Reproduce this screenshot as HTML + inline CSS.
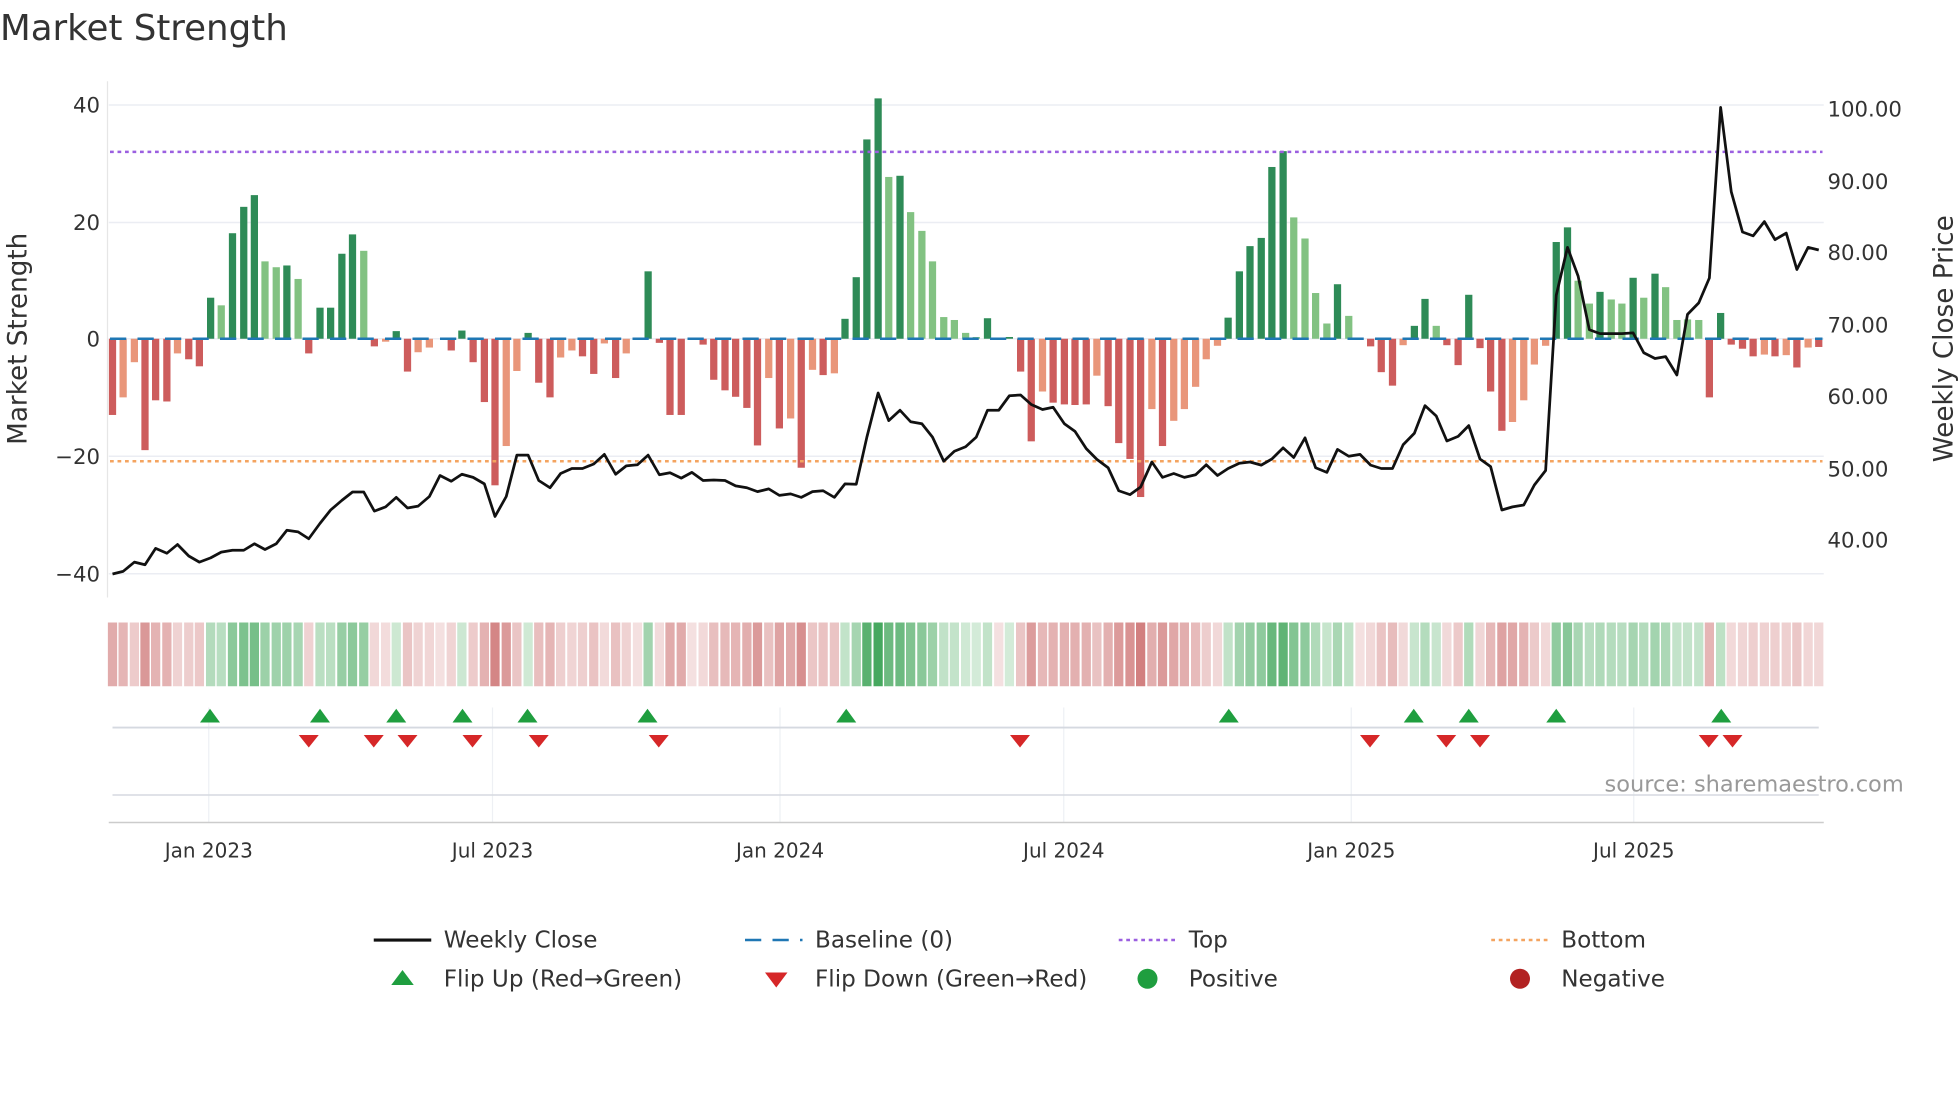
<!DOCTYPE html>
<html><head><meta charset="utf-8"><style>
html,body{margin:0;padding:0;background:#fff;}
svg{display:block;font-family:"DejaVu Sans","Liberation Sans",sans-serif;}
</style></head><body>
<svg id="s" width="1960" height="1102" viewBox="0 0 1568 881.6" xmlns="http://www.w3.org/2000/svg">
<rect width="1568" height="882" fill="#fff"/>
<text x="0" y="32" font-size="28.5" fill="#333">Market Strength</text>
<g stroke="#ebedf3" stroke-width="1.2">
<line x1="87" x2="1459" y1="84" y2="84"/><line x1="87" x2="1459" y1="178" y2="178"/><line x1="87" x2="1459" y1="271" y2="271"/><line x1="87" x2="1459" y1="365" y2="365"/><line x1="87" x2="1459" y1="459" y2="459"/>
</g>
<line x1="86" x2="86" y1="65" y2="478" stroke="#e6e6e6"/>
<g id="bars"></g>
<line x1="88" x2="1458" y1="271" y2="271" stroke="#1f77b4" stroke-width="2" stroke-dasharray="13,9"/>
<line x1="88" x2="1458" y1="121.5" y2="121.5" stroke="#9b5fe0" stroke-width="2" stroke-dasharray="3,3"/>
<line x1="88" x2="1458" y1="369" y2="369" stroke="#f4a460" stroke-width="2" stroke-dasharray="3,3"/>
<polyline id="price" fill="none" stroke="#111" stroke-width="2.2" stroke-linejoin="round"/>
<g font-size="17" fill="#333" text-anchor="end">
<text x="80" y="90">40</text><text x="80" y="184">20</text><text x="80" y="277">0</text><text x="80" y="371">−20</text><text x="80" y="465">−40</text>
</g>
<g font-size="17" fill="#333">
<text x="1462" y="93">100.00</text><text x="1462" y="151">90.00</text><text x="1462" y="208">80.00</text><text x="1462" y="266">70.00</text><text x="1462" y="323">60.00</text><text x="1462" y="381">50.00</text><text x="1462" y="438">40.00</text>
</g>
<text transform="translate(21,271) rotate(-90)" text-anchor="middle" font-size="21" fill="#333">Market Strength</text>
<text transform="translate(1562,271) rotate(-90)" text-anchor="middle" font-size="21" fill="#333">Weekly Close Price</text>
<g id="heat"></g>
<g stroke="#eef0f4" stroke-width="1">
<line x1="167" x2="167" y1="566" y2="658"/><line x1="394" x2="394" y1="566" y2="658"/><line x1="624" x2="624" y1="566" y2="658"/><line x1="851" x2="851" y1="566" y2="658"/><line x1="1081" x2="1081" y1="566" y2="658"/><line x1="1307" x2="1307" y1="566" y2="658"/>
</g>
<line x1="90" x2="1455" y1="582" y2="582" stroke="#d5d9e0" stroke-width="1.5"/>
<line x1="90" x2="1455" y1="636" y2="636" stroke="#d5d9e0" stroke-width="1.2"/>
<line x1="87" x2="1459" y1="658" y2="658" stroke="#ccc" stroke-width="1.2"/>
<g id="flips"></g>
<text x="1523" y="633" text-anchor="end" font-size="18" fill="#999">source: sharemaestro.com</text>
<g font-size="16" fill="#333" text-anchor="middle">
<text x="167" y="686">Jan 2023</text><text x="394" y="686">Jul 2023</text><text x="624" y="686">Jan 2024</text><text x="851" y="686">Jul 2024</text><text x="1081" y="686">Jan 2025</text><text x="1307" y="686">Jul 2025</text>
</g>
<g font-size="18.5" fill="#333">
<line x1="299" x2="345" y1="752" y2="752" stroke="#111" stroke-width="2.5"/><text x="355" y="758">Weekly Close</text>
<line x1="596" x2="642" y1="752" y2="752" stroke="#1f77b4" stroke-width="2" stroke-dasharray="13,9"/><text x="652" y="758">Baseline (0)</text>
<line x1="895" x2="941" y1="752" y2="752" stroke="#9b5fe0" stroke-width="2" stroke-dasharray="3,3"/><text x="951" y="758">Top</text>
<line x1="1193" x2="1239" y1="752" y2="752" stroke="#f4a460" stroke-width="2" stroke-dasharray="3,3"/><text x="1249" y="758">Bottom</text>
<polygon points="313,788 331,788 322,776" fill="#1f9e3f"/><text x="355" y="789">Flip Up (Red→Green)</text>
<polygon points="612,778 630,778 621,790" fill="#d62728"/><text x="652" y="789">Flip Down (Green→Red)</text>
<circle cx="918" cy="783" r="8" fill="#1f9e3f"/><text x="951" y="789">Positive</text>
<circle cx="1216" cy="783" r="8" fill="#b22222"/><text x="1249" y="789">Negative</text>
</g>
</svg>
<script>
var NS="http://www.w3.org/2000/svg";
function el(t,a,p){var e=document.createElementNS(NS,t);for(var k in a)e.setAttribute(k,a[k]);p.appendChild(e);return e;}
var b1=[[180,-13,'R'],[197,-10,'S'],[215,-4,'S'],[232,-19,'R'],[249,-10.5,'R'],[267,-10.7,'R'],[284,-2.5,'S'],[302,-3.5,'R'],[319,-4.7,'R'],[337,7,'D'],[354,5.7,'L'],[372,18,'D'],[390,22.5,'D'],[407,24.5,'D'],[424,13.2,'L'],[442,12.2,'L'],[459,12.5,'D'],[477,10.2,'L'],[494,-2.5,'R'],[512,5.3,'D'],[529,5.3,'D'],[547,14.5,'D'],[564,17.8,'D'],[582,15,'L'],[599,-1.3,'R'],[617,-0.5,'S'],[634,1.3,'D'],[652,-5.6,'R'],[669,-2.3,'S'],[687,-1.5,'S'],[704,0,'S'],[722,-2,'R'],[739,1.4,'D'],[757,-4,'R'],[775,-10.8,'R'],[792,-25,'R'],[810,-18.3,'S'],[827,-5.5,'S'],[845,1,'D'],[862,-7.5,'R'],[880,-10,'R'],[897,-3.2,'S'],[915,-2,'S'],[932,-3,'R'],[950,-6,'R'],[967,-0.8,'S'],[985,-6.7,'R'],[1002,-2.5,'S'],[1020,0,'S'],[1037,11.5,'D'],[1055,-0.7,'R'],[1072,-13,'R'],[1090,-13,'R'],[1107,0,'S'],[1125,-1,'R'],[1142,-7,'R'],[1160,-8.8,'R'],[1177,-9.9,'R'],[1195,-11.8,'R'],[1212,-18.2,'R'],[1230,-6.7,'S'],[1247,-15.3,'R'],[1265,-13.6,'S'],[1282,-22,'R'],[1300,-5.3,'S'],[1317,-6.2,'R'],[1335,-5.9,'S'],[1352,3.4,'D'],[1370,10.5,'D'],[1387,34,'D'],[1405,41,'D'],[1422,27.6,'L'],[1440,27.8,'D'],[1457,21.6,'L'],[1475,18.4,'L'],[1492,13.2,'L'],[1510,3.7,'L'],[1527,3.2,'L'],[1545,1,'L'],[1562,0.3,'L']];
var b2=[[12,3.5,'D'],[30,0,'S'],[47,0.3,'D'],[65,-5.6,'R'],[82,-17.5,'R'],[100,-9,'S'],[117,-10.9,'R'],[135,-11.2,'R'],[152,-11.3,'R'],[170,-11.2,'R'],[187,-6.3,'S'],[205,-11.5,'R'],[222,-17.8,'R'],[240,-20.5,'R'],[257,-27,'R'],[275,-12,'S'],[292,-18.3,'R'],[310,-14,'S'],[327,-12,'S'],[345,-8.2,'S'],[362,-3.5,'S'],[380,-1.2,'S'],[397,3.6,'D'],[415,11.5,'D'],[432,15.8,'D'],[450,17.2,'D'],[467,29.3,'D'],[485,32,'D'],[502,20.7,'L'],[520,17.1,'L'],[537,7.8,'L'],[555,2.6,'L'],[572,9.3,'D'],[590,3.9,'L'],[608,0,'S'],[625,-1.3,'R'],[642,-5.7,'R'],[660,-8,'R'],[677,-1.1,'S'],[695,2.2,'D'],[712,6.8,'D'],[730,2.2,'L'],[747,-1.1,'R'],[765,-4.5,'R'],[782,7.5,'D'],[800,-1.6,'R'],[817,-9,'R'],[835,-15.7,'R'],[852,-14.2,'S'],[870,-10.5,'S'],[887,-4.4,'S'],[905,-1.2,'S'],[922,16.5,'D'],[940,19,'D'],[957,9.9,'L'],[975,6,'L'],[992,8,'D'],[1010,6.7,'L'],[1027,6,'L'],[1045,10.4,'D'],[1062,7,'L'],[1080,11.1,'D'],[1097,8.8,'L'],[1115,3.2,'L'],[1132,3.3,'L'],[1150,3.2,'L'],[1167,-10,'R'],[1185,4.4,'D'],[1202,-1,'R'],[1220,-1.7,'R'],[1237,-3,'R'],[1255,-2.7,'S'],[1272,-3,'R'],[1290,-2.8,'S'],[1307,-4.9,'R'],[1325,-1.5,'S'],[1342,-1.4,'R']];
var bars=[];b1.forEach(function(b){bars.push([b[0]/2,b[1],b[2]]);});b2.forEach(function(b){bars.push([784+b[0]/2,b[1],b[2]]);});
var col={D:'#2e8b57',L:'#82c282',R:'#cd5c5c',S:'#e9967a'};
var g=document.getElementById('bars'),h=document.getElementById('heat');
function mix(a,b,t){return 'rgb('+a.map(function(v,i){return Math.round(v+(b[i]-v)*t);}).join(',')+')';}
bars.forEach(function(b){
 var x=b[0],v=b[1],y0=271,y1=271-v*4.69;
 if(Math.abs(v)>0.05)el('rect',{x:x-2.9,y:Math.min(y0,y1),width:5.8,height:Math.abs(y1-y0),fill:col[b[2]]},g);
 var c;
 if(v>0){var t=Math.min(1,Math.pow(v/41,0.8));c=mix([214,236,218],[70,168,95],t);}
 else{var t=Math.min(1,Math.pow(-v/27,0.8));c=mix([244,224,224],[210,128,128],t);}
 el('rect',{x:x-3.7,y:498,width:7.4,height:51,fill:c},h);
});
var l1=[[180,1497],[197,1490],[215,1466],[232,1473],[249,1430],[267,1443],[284,1420],[302,1450],[319,1466],[337,1455],[354,1440],[372,1435],[390,1435],[407,1418],[424,1433],[442,1418],[459,1383],[477,1387],[494,1405],[512,1365],[529,1330],[547,1305],[564,1283],[582,1283],[599,1333],[617,1322],[634,1297],[652,1325],[669,1320],[687,1295],[704,1240],[722,1255],[739,1237],[757,1245],[775,1262],[792,1347],[810,1295],[827,1187],[845,1187],[862,1253],[880,1272],[897,1235],[915,1222],[932,1222],[950,1210],[967,1185],[985,1237],[1002,1215],[1020,1212],[1037,1187],[1055,1238],[1072,1233],[1090,1247],[1107,1232],[1125,1253],[1142,1252],[1160,1253],[1177,1267],[1195,1272],[1212,1282],[1230,1275],[1247,1292],[1265,1288],[1282,1297],[1300,1282],[1317,1280],[1335,1297],[1352,1262],[1370,1263],[1387,1140],[1405,1025],[1422,1097],[1440,1070],[1457,1100],[1475,1105],[1492,1140],[1510,1203],[1527,1177],[1545,1165],[1562,1140]];
var l2=[[12,1070],[30,1070],[47,1032],[65,1030],[82,1055],[100,1068],[117,1062],[135,1105],[152,1125],[170,1170],[187,1198],[205,1220],[222,1280],[240,1290],[257,1270],[275,1205],[292,1245],[310,1235],[327,1245],[345,1238],[362,1212],[380,1240],[397,1222],[415,1208],[432,1205],[450,1213],[467,1197],[485,1168],[502,1193],[520,1142],[537,1220],[555,1232],[572,1172],[590,1190],[608,1185],[625,1213],[642,1222],[660,1222],[677,1160],[695,1130],[712,1058],[730,1085],[747,1150],[765,1138],[782,1110],[800,1197],[817,1217],[835,1330],[852,1322],[870,1317],[887,1265],[905,1227],[922,770],[940,645],[957,720],[975,860],[992,870],[1010,870],[1027,870],[1045,868],[1062,920],[1080,935],[1097,930],[1115,978],[1132,820],[1150,790],[1167,725],[1185,280],[1202,500],[1220,605],[1237,615],[1255,578],[1272,625],[1290,608],[1307,703],[1325,645],[1342,652]];
var pts=[];l1.forEach(function(p){pts.push((p[0]/2).toFixed(1)+','+(p[1]/3.26).toFixed(1));});l2.forEach(function(p){pts.push((784+p[0]/2).toFixed(1)+','+(p[1]/3.26).toFixed(1));});
document.getElementById('price').setAttribute('points',pts.join(' '));
var f=document.getElementById('flips');
[168,256,317,370,422,518,677,983,1131,1175,1245,1377].forEach(function(x){el('polygon',{points:(x-8)+',578 '+(x+8)+',578 '+x+',567',fill:'#1f9e3f'},f);});
[247,299,326,378,431,527,816,1096,1157,1184,1367,1386].forEach(function(x){el('polygon',{points:(x-8)+',588 '+(x+8)+',588 '+x+',598',fill:'#d62728'},f);});
</script>
</body></html>
